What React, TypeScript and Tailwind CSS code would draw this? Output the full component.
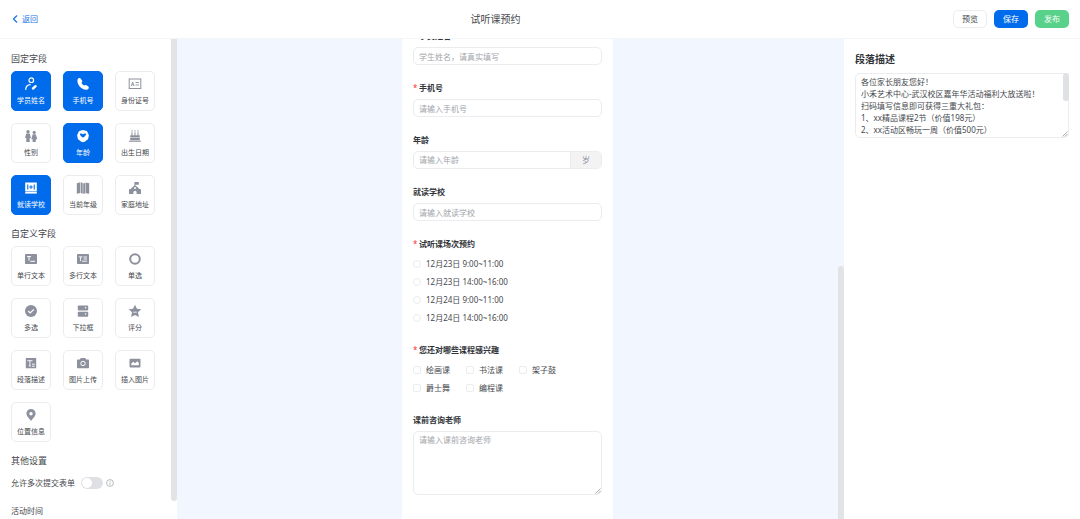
import type { ReactNode } from "react";

type Field = {
  title: string;
  icon: ReactNode;
  active?: boolean;
};

const Icon = ({ children }: { children: ReactNode }) => (
  <svg
    viewBox="0 0 14 14"
    className="size-3.5"
    fill="currentColor"
    aria-hidden="true"
  >
    {children}
  </svg>
);

const icons = {
  student: (
    <Icon>
      <g fill="none" stroke="currentColor" strokeWidth="1.2" strokeLinecap="round">
        <circle cx="7.3" cy="3.2" r="2.3" />
        <path d="M1.700 12.500c.2-3 2-4.700 4.500-4.800" />
        <path d="M9 11.500l2.600-2.300" strokeWidth="2.400" />
      </g>
    </Icon>
  ),
  phone: (
    <Icon>
      <path d="M1.600 2.400C2.400 1 4 .6 4.900 1.800l1.200 2c.4.8 0 1.500-.6 2 .5 1.200 1.500 2.200 2.700 2.800.7-.6 1.400-.9 2.200-.4l1.900 1.300c1 .8.500 2.400-.9 3C6.800 14 .2 7.500 1.600 2.400z" />
    </Icon>
  ),
  idCard: (
    <Icon>
      <rect x="1.200" y="2" width="11.600" height="9.500" fill="none" stroke="currentColor" />
      <path
        d="M3.300 9l1.400-4 1.400 4M3.800 7.800h1.900M7.500 5.500H11M7.500 8H11"
        fill="none"
        stroke="currentColor"
        strokeWidth=".9"
      />
    </Icon>
  ),
  gender: (
    <Icon>
      <circle cx="4" cy="2.700" r="1.700" />
      <path d="M2.300 4.600h3.400L7 9H5.700v4H2.300V9H1z" />
      <circle cx="10.200" cy="3.400" r="1.600" />
      <path d="M8.700 5.200h3l1.700 5h-1.600V13H8.600v-2.800H7.200z" />
    </Icon>
  ),
  age: (
    <Icon>
      <path
        fillRule="evenodd"
        d="M7 1l2 .6 2.100.7.900 1.900.9 2-.4 2-.5 2-1.700 1.300L8.700 12.700 7 13.300l-1.700-.6L3.700 11.500 2 10.200l-.5-2-.4-2 .9-2 .9-1.900L5 1.600zM3.800 4.700C4.300 6.900 5.700 8 7 8.500c1.300-.5 2.700-1.600 3.200-3.800-1.200-.5-2.400-.2-3.200.6-.8-.8-2-1.100-3.200-.6z"
      />
    </Icon>
  ),
  birthday: (
    <Icon>
      <path d="M3.500 3.300h1v3.200h-1zM6.500 3.300h1v3.200h-1zM9.500 3.300h1v3.200h-1zM3.500 1.300h1v1.200h-1zM6.500 1.300h1v1.200h-1zM9.500 1.300h1v1.200h-1z" />
      <path d="M2.200 6.300h9.600v2.200H2.200zM2.200 9.100h9.600v2.100H2.200zM1 11.700h12v1H1z" />
    </Icon>
  ),
  school: (
    <Icon>
      <path
        fillRule="evenodd"
        d="M1.200 1.500h11.600v9H1.200zM3.200 3.600v4.800h1.100V3.600zM9.700 3.600v4.800h1.100V3.600zM6.500 4.200v1.400H5.200v1h1.300V8h1V6.600h1.300v-1H7.500V4.200z"
      />
      <path d="M1.200 11h11.600v1.600H1.200z" />
    </Icon>
  ),
  grade: (
    <Icon>
      <path d="M.8 2.200l3.600-.9v10.600L.8 12.800zM5 1.300l1.700.8v10.700L5 11.900zM7.200 2.600l2.100-.8v10.500l-2.100.8zM9.800 1.500l3.400.7v10.600l-3.400-.6z" />
    </Icon>
  ),
  home: (
    <Icon>
      <path d="M6.400 1h4.400v2.800H7.400V4.500L11 7.600v1.400H3V7.600l3.400-3.100z" />
      <path
        fillRule="evenodd"
        d="M1.500 8h11l.5 1v4H8.600v-1.700a1.600 1.600 0 0 0-3.200 0V13H1V9z"
      />
      <circle cx="7" cy="7" r="1" fill="white" />
    </Icon>
  ),
  singleText: (
    <Icon>
      <rect x="1" y="2" width="12" height="10" rx=".8" />
      <path d="M3 4.600h4M5 4.600v4M6.300 9.300H11" stroke="white" strokeWidth="1" fill="none" />
    </Icon>
  ),
  multiText: (
    <Icon>
      <rect x="1" y="2" width="12" height="10" rx=".8" />
      <path
        d="M2.800 4.900h3.700M4.600 4.900v4.200M7.500 5H11M7.500 7H11M6 9.200h5"
        stroke="white"
        strokeWidth=".9"
        fill="none"
      />
    </Icon>
  ),
  radio: (
    <Icon>
      <circle cx="7" cy="7" r="4.800" fill="none" stroke="currentColor" strokeWidth="2" />
    </Icon>
  ),
  checkbox: (
    <Icon>
      <circle cx="7" cy="7" r="6" />
      <path d="M4.200 7l2 2 3.700-3.700" stroke="white" strokeWidth="1.200" fill="none" />
    </Icon>
  ),
  select: (
    <Icon>
      <rect x="1.800" y="1.500" width="10.400" height="5" rx=".8" />
      <rect x="1.800" y="7.700" width="10.400" height="5" rx=".8" />
      <path d="M8.500 3.300h2.200L9.600 4.800zM8.500 9.500h2.200L9.600 11z" fill="white" />
    </Icon>
  ),
  rate: (
    <Icon>
      <path d="M7 .8l1.900 3.900 4.300.5L10 8.200l.9 4.700L7 10.900l-3.900 2L4 8.200.8 5.200l4.300-.5z" />
      <path d="M5.200 8.200h3.600" stroke="white" strokeWidth=".8" />
    </Icon>
  ),
  paragraph: (
    <Icon>
      <rect x="1.800" y="2" width="10.400" height="10.300" rx=".6" />
      <path
        d="M3.300 4.700h5.200M5.900 4.700v5.200M4.800 9.900h2.200M8 8.200h2.800M8 10.200h2.800"
        stroke="white"
        strokeWidth=".9"
        fill="none"
      />
    </Icon>
  ),
  camera: (
    <Icon>
      <path d="M4.800 2h4.400l1 1.600H12c.6 0 1 .4 1 1v6.600c0 .6-.4 1-1 1H2c-.6 0-1-.4-1-1V4.600c0-.6.400-1 1-1h1.800z" />
      <circle cx="7" cy="7.500" r="2.200" fill="none" stroke="white" strokeWidth="1" />
    </Icon>
  ),
  image: (
    <Icon>
      <rect x="1.500" y="2.800" width="11" height="8.600" rx="1" />
      <path d="M3.300 9.200V7.600L5.300 5.800 7 7.300l2.300-2 1.500 1.600v2.300z" fill="white" />
    </Icon>
  ),
  location: (
    <Icon>
      <path
        fillRule="evenodd"
        d="M7 1a4.600 4.600 0 0 0-4.600 4.600C2.400 8.500 5 10.500 7 13c2-2.500 4.600-4.500 4.600-7.400A4.600 4.600 0 0 0 7 1zm0 3a1.700 1.700 0 1 1 0 3.400A1.700 1.700 0 0 1 7 4z"
      />
    </Icon>
  ),
};

const fixedFields: Field[] = [
  { title: "学员姓名", icon: icons.student, active: true },
  { title: "手机号", icon: icons.phone, active: true },
  { title: "身份证号", icon: icons.idCard },
  { title: "性别", icon: icons.gender },
  { title: "年龄", icon: icons.age, active: true },
  { title: "出生日期", icon: icons.birthday },
  { title: "就读学校", icon: icons.school, active: true },
  { title: "当前年级", icon: icons.grade },
  { title: "家庭地址", icon: icons.home },
];

const customFields: Field[] = [
  { title: "单行文本", icon: icons.singleText },
  { title: "多行文本", icon: icons.multiText },
  { title: "单选", icon: icons.radio },
  { title: "多选", icon: icons.checkbox },
  { title: "下拉框", icon: icons.select },
  { title: "评分", icon: icons.rate },
  { title: "段落描述", icon: icons.paragraph },
  { title: "图片上传", icon: icons.camera },
  { title: "插入图片", icon: icons.image },
  { title: "位置信息", icon: icons.location },
];

const sessions = [
  "12月23日 9:00~11:00",
  "12月23日 14:00~16:00",
  "12月24日 9:00~11:00",
  "12月24日 14:00~16:00",
];

const courses = ["绘画课", "书法课", "架子鼓", "爵士舞", "编程课"];

const description = `各位家长朋友您好！
小禾艺术中心-武汉校区嘉年华活动福利大放送啦！
扫码填写信息即可获得三重大礼包：
1、xx精品课程2节（价值198元）
2、xx活动区畅玩一周（价值500元）`;

const inputClass =
  "block h-[18px] w-full rounded-[5px] border border-[#ebecef] bg-white px-[5px] text-[8px] outline-none placeholder:text-[#a3a5ab]";

const SectionTitle = ({ children }: { children: ReactNode }) => (
  <h2 className="mb-1.5 text-[9px] leading-3 text-[#45484d]">{children}</h2>
);

const FieldGrid = ({ fields }: { fields: Field[] }) => (
  <div className="mb-[13px] flex flex-wrap gap-3">
    {fields.map((field) => (
      <button
        key={field.title}
        type="button"
        className={`flex size-10 flex-col items-center gap-[5px] rounded-[5px] border pt-[5px] ${
          field.active
            ? "border-[#006ceb] bg-[#006ceb] text-white"
            : "border-[#ebecef] bg-white text-[#8d919d]"
        }`}
      >
        {field.icon}
        <span
          className={`text-[7px] leading-[10px] whitespace-nowrap ${
            field.active ? "text-white" : "text-[#45484d]"
          }`}
        >
          {field.title}
        </span>
      </button>
    ))}
  </div>
);

const labelClass = "flex h-[22px] items-center text-[8px] font-bold text-[#303338]";

const Star = () => <span className="w-1.5 font-normal text-[#f5333d]">*</span>;

const FormField = ({
  id,
  label,
  required,
  children,
}: {
  id: string;
  label: string;
  required?: boolean;
  children: ReactNode;
}) => (
  <div className="mb-3">
    <label htmlFor={id} className={labelClass}>
      {required && <Star />}
      {label}
    </label>
    {children}
  </div>
);

const ResizeGrip = () => (
  <svg
    viewBox="0 0 6 6"
    className="pointer-events-none absolute right-px bottom-px size-1.5"
    aria-hidden="true"
  >
    <path d="M.5 5.500l5-5M3 5.500L5.500 3" stroke="#8b8b8b" strokeWidth=".7" />
  </svg>
);

const Header = () => (
  <header className="flex h-[39px] shrink-0 items-center justify-between border-b border-[#f4f5f7] bg-white px-[11px]">
    <a href="#" className="flex items-center gap-[3px] text-[8px] text-[#1a73e8]">
      <svg
        viewBox="0 0 8 8"
        className="size-2"
        fill="none"
        stroke="currentColor"
        strokeWidth="1.300"
        aria-hidden="true"
      >
        <path d="M6 .5L2.500 4 6 7.500" />
      </svg>
      返回
    </a>
    <h1 className="text-[10px] text-[#45484d]">试听课预约</h1>
    <div className="flex gap-[7px] text-[8px]">
      <button
        type="button"
        className="h-[18px] w-[34px] rounded-[5px] border border-[#ebecef] text-[#45484d]"
      >
        预览
      </button>
      <button
        type="button"
        className="h-[18px] w-[34px] rounded-[5px] bg-[#006ceb] text-white"
      >
        保存
      </button>
      <button
        type="button"
        className="h-[18px] w-[34px] rounded-[5px] bg-[#58d28a] text-white"
      >
        发布
      </button>
    </div>
  </header>
);

const Sidebar = () => (
  <aside className="flex w-[177px] shrink-0 justify-between overflow-hidden bg-white pl-[11px]">
    <div className="w-36 pt-3.5">
      <SectionTitle>固定字段</SectionTitle>
      <FieldGrid fields={fixedFields} />
      <SectionTitle>自定义字段</SectionTitle>
      <FieldGrid fields={customFields} />
      <SectionTitle>其他设置</SectionTitle>
      <div className="mb-2 flex h-5 items-center text-[8px] text-[#45484d]">
        <label htmlFor="multiple">允许多次提交表单</label>
        <input
          id="multiple"
          type="checkbox"
          role="switch"
          className="ml-1.5 h-3 w-[22px] appearance-none rounded-full bg-[#dfe0e3] p-px before:block before:size-2.5 before:rounded-full before:bg-white checked:bg-[#006ceb] checked:before:ml-2.5"
        />
        <svg
          viewBox="0 0 8 8"
          className="ml-[3px] size-2 text-[#9a9ca3]"
          fill="none"
          stroke="currentColor"
          strokeWidth=".7"
          aria-hidden="true"
        >
          <circle cx="4" cy="4" r="3.400" />
          <path d="M4 1.900v.8M4 3.400v2.700" />
        </svg>
      </div>
      <div className="flex h-5 items-center text-[8px] text-[#45484d]">
        活动时间
      </div>
    </div>
    <div className="mb-[18px] w-1.5 rounded-b-sm bg-[#e2e3e5]" />
  </aside>
);

const FormPreview = () => (
  <main className="flex min-w-0 flex-1 overflow-hidden bg-[#f2f6ff]">
    <div className="flex flex-1 justify-center">
      {/* scrolled down a little, the first label is half hidden */}
      <form className="-mt-3.5 w-[211px] bg-white px-[11px]">
        <FormField id="name" label="学员姓名" required>
          <input id="name" className={inputClass} placeholder="学生姓名，请真实填写" />
        </FormField>
        <FormField id="phone" label="手机号" required>
          <input id="phone" className={inputClass} placeholder="请输入手机号" />
        </FormField>
        <FormField id="age" label="年龄">
          <div className="flex h-[18px] overflow-hidden rounded-[5px] border border-[#ebecef] text-[8px]">
            <input
              id="age"
              className="min-w-0 flex-1 px-[5px] outline-none placeholder:text-[#a3a5ab]"
              placeholder="请输入年龄"
            />
            <span className="flex w-[31px] items-center justify-center border-l border-[#ebecef] bg-[#f3f3f4] text-[#8d919d]">
              岁
            </span>
          </div>
        </FormField>
        <FormField id="school" label="就读学校">
          <input id="school" className={inputClass} placeholder="请输入就读学校" />
        </FormField>

        <fieldset className="mb-3">
          <legend className={labelClass}>
            <Star />
            试听课场次预约
          </legend>
          {sessions.map((session) => (
            <label
              key={session}
              className="flex h-[18px] items-center gap-[5px] text-[8px] text-[#45484d]"
            >
              <input
                type="radio"
                name="session"
                className="size-2 appearance-none rounded-full border border-[#ebecef] checked:border-2 checked:border-[#006ceb]"
              />
              {session}
            </label>
          ))}
        </fieldset>

        <fieldset className="mb-3">
          <legend className={labelClass}>
            <Star />
            您还对哪些课程感兴趣
          </legend>
          <div className="flex flex-wrap gap-x-4">
            {courses.map((course) => (
              <label
                key={course}
                className="flex h-[18px] items-center gap-[5px] text-[8px] text-[#45484d]"
              >
                <input
                  type="checkbox"
                  className="size-2 appearance-none rounded-xs border border-[#ebecef] checked:bg-[#006ceb]"
                />
                {course}
              </label>
            ))}
          </div>
        </fieldset>

        <FormField id="teacher" label="课前咨询老师">
          <div className="relative">
            <textarea
              id="teacher"
              className="block h-16 w-full resize-none rounded-[5px] border border-[#ebecef] px-[5px] py-0.5 text-[8px] leading-3 outline-none placeholder:text-[#a3a5ab]"
              placeholder="请输入课前咨询老师"
            />
            <ResizeGrip />
          </div>
        </FormField>
      </form>
    </div>
    <div className="mt-[227px] w-1.5 rounded-t-sm bg-[#e2e3e5]" />
  </main>
);

const SettingsPanel = () => (
  <aside className="w-[236px] shrink-0 bg-white px-[11px] pt-3">
    <label
      htmlFor="description"
      className="mb-1.5 block text-[10px] leading-4 font-bold text-[#303338]"
    >
      段落描述
    </label>
    <div className="relative">
      <textarea
        id="description"
        defaultValue={description}
        className="block h-[65px] w-full resize-none overflow-hidden rounded-[5px] border border-[#ebecef] px-[5px] py-0.5 text-[8px] leading-3 text-[#45484d] outline-none"
      />
      <div className="absolute top-0 right-0 h-7 w-1.5 rounded-sm bg-[#e0e1e4]" />
      <ResizeGrip />
    </div>
  </aside>
);

export default function App() {
  return (
    <div className="flex h-screen flex-col overflow-hidden bg-white font-['Noto_Sans','Noto_Sans_CJK_SC',sans-serif]">
      <Header />
      <div className="flex min-h-0 flex-1">
        <Sidebar />
        <FormPreview />
        <SettingsPanel />
      </div>
    </div>
  );
}
